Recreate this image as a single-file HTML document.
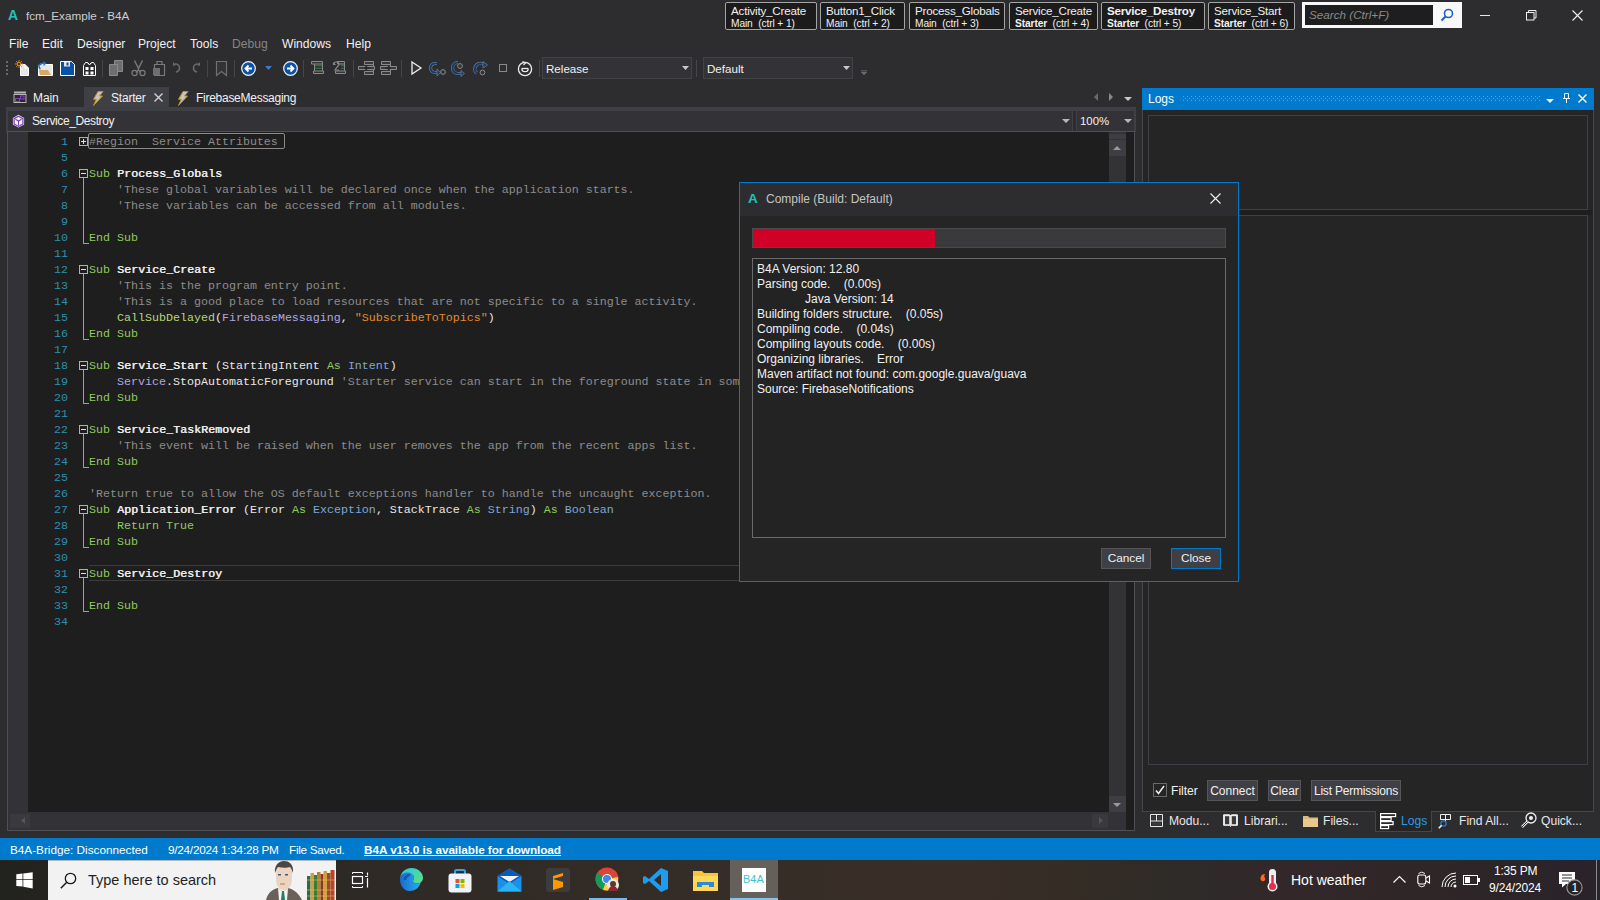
<!DOCTYPE html>
<html><head><meta charset="utf-8">
<style>
*{margin:0;padding:0;box-sizing:border-box}
html,body{width:1600px;height:900px;overflow:hidden;background:#2d2d30;font-family:"Liberation Sans",sans-serif;font-size:12px;color:#f1f1f1}
.a{position:absolute;white-space:nowrap}
svg{position:absolute;overflow:visible}
.mi{position:absolute;top:37px;font-size:12.1px;color:#f1f1f1;white-space:nowrap}
.qb{position:absolute;top:2px;height:28px;background:#1b1b1c;border:1px solid #a4a4a4;border-radius:2px}
.qb b{position:absolute;left:5px;top:1px;font-weight:normal;font-size:11.6px;letter-spacing:-0.2px;color:#f1f1f1}
.qb i{position:absolute;left:5px;top:15px;font-style:normal;font-size:10.2px;letter-spacing:-0.1px;color:#f1f1f1}
.qb i em{font-style:normal;font-weight:bold}
.tsep{position:absolute;top:60px;width:1px;height:17px;background:#46464a}
.ln{position:absolute;width:40px;left:28px;text-align:right;color:#2b91af;font-family:"Liberation Mono",monospace;font-size:11.67px;line-height:16px;height:16px}
.cl{position:absolute;left:89px;white-space:pre;font-family:"Liberation Mono",monospace;font-size:11.67px;line-height:16px;height:16px;color:#dcdcdc}
.kw{color:#8fcb5f}
.cm{color:#8c8c8c}
.ty{color:#7ea6d6}
.fn{color:#b5d77a}
.ob{color:#b0a6e0}
.st{color:#e68a2a}
.nm{color:#ececec;text-shadow:0.5px 0 0 #ececec}
.wh{color:#e8e8e8}
.rg{color:#8c8c8c}
.fold{position:absolute;left:79px;width:9px;height:9px;border:1px solid #b0b0b0;background:#1e1e1e}
.fold::after{content:"";position:absolute;left:1px;top:3px;width:5px;height:1px;background:#e0e0e0}
.vl{position:absolute;left:83px;width:1px;background:#a0a0a0}
.hl{position:absolute;left:83px;width:6px;height:1px;background:#a0a0a0}
.btn{position:absolute;height:21px;background:#3f3f46;border:1px solid #555558;color:#f1f1f1;font-size:12px;text-align:center;line-height:20px;white-space:nowrap}
.lt{position:absolute;left:757px;font-size:12px;color:#f1f1f1;white-space:nowrap;line-height:15px}

</style></head><body>
<!-- title bar -->
<div class="a" style="left:8px;top:7px;color:#1fc4bb;font-weight:bold;font-size:14px">A</div>
<div class="a" style="left:26px;top:9px;color:#cccccc;font-size:11.7px">fcm_Example - B4A</div>
<div class="qb" style="left:725px;width:92px"><b>Activity_Create</b><i>Main&nbsp; (ctrl + 1)</i></div>
<div class="qb" style="left:820px;width:85px"><b>Button1_Click</b><i>Main&nbsp; (ctrl + 2)</i></div>
<div class="qb" style="left:909px;width:96px"><b>Process_Globals</b><i>Main&nbsp; (ctrl + 3)</i></div>
<div class="qb" style="left:1009px;width:89px"><b>Service_Create</b><i><em>Starter</em>&nbsp; (ctrl + 4)</i></div>
<div class="qb" style="left:1101px;width:104px"><b style="font-weight:bold">Service_Destroy</b><i><em>Starter</em>&nbsp; (ctrl + 5)</i></div>
<div class="qb" style="left:1208px;width:87px"><b>Service_Start</b><i><em>Starter</em>&nbsp; (ctrl + 6)</i></div>
<div class="a" style="left:1302px;top:2px;width:160px;height:26px;background:#f8f8fa"></div>
<div class="a" style="left:1305px;top:5px;width:128px;height:20px;background:#1e1e1e"></div>
<div class="a" style="left:1309px;top:8px;color:#8a8a8a;font-style:italic;font-size:11.7px">Search (Ctrl+F)</div>
<svg style="left:1440px;top:8px" width="14" height="14"><circle cx="8.5" cy="5.5" r="4" fill="none" stroke="#2060c0" stroke-width="1.6"/><line x1="5.5" y1="8.5" x2="1.5" y2="12.5" stroke="#2060c0" stroke-width="2"/></svg>
<div class="a" style="left:1480px;top:15px;width:10px;height:1px;background:#e8e8e8"></div>
<svg style="left:1526px;top:10px" width="11" height="11"><rect x="0.5" y="2.5" width="7.5" height="7.5" fill="none" stroke="#f0f0f0"/><path d="M2.5 2.5V0.5H10V8H8" fill="none" stroke="#f0f0f0"/></svg>
<svg style="left:1572px;top:10px" width="11" height="11"><path d="M0.5 0.5l10 10M10.5 0.5l-10 10" stroke="#f0f0f0" stroke-width="1.1"/></svg>
<!-- menu -->
<div class="mi" style="left:9px">File</div>
<div class="mi" style="left:42px">Edit</div>
<div class="mi" style="left:77px">Designer</div>
<div class="mi" style="left:138px">Project</div>
<div class="mi" style="left:190px">Tools</div>
<div class="mi" style="left:232px;color:#858585">Debug</div>
<div class="mi" style="left:282px">Windows</div>
<div class="mi" style="left:346px">Help</div>
<!-- toolbar -->
<svg style="left:6px;top:60px" width="3" height="17"><g fill="#6a6a6a"><rect x="0" y="1" width="2" height="2"/><rect x="0" y="5" width="2" height="2"/><rect x="0" y="9" width="2" height="2"/><rect x="0" y="13" width="2" height="2"/></g></svg>
<!-- new -->
<svg style="left:15px;top:60px" width="16" height="16"><path d="M5.5 4.5h4.5l3.5 3.5v7.5h-8z" fill="#e6e6e6" stroke="#ffffff" stroke-width="1"/><path d="M10 4.5v3.5h3.5" fill="none" stroke="#ffffff"/><circle cx="4" cy="4" r="1.8" fill="none" stroke="#e8900a" stroke-width="1.1"/><path d="M4 0v1.6M4 6.4V8M0 4h1.6M6.4 4H8M1.2 1.2l1.1 1.1M5.7 5.7l1.1 1.1M6.8 1.2L5.7 2.3M2.3 5.7L1.2 6.8" stroke="#e8900a" stroke-width="1"/></svg>
<!-- open -->
<svg style="left:37px;top:60px" width="17" height="17"><path d="M1.5 5.5h2l1-1h11v11h-14z" fill="#e8e8e8" stroke="#ffffff" stroke-width="1"/><path d="M2 10h9l3 5H3z" fill="#d8a860"/><path d="M3.5 9c-2-1-2-4 0-5 1.5-1 3-1 4.5-0.5" fill="none" stroke="#1e72d0" stroke-width="1.6"/><path d="M6.5 1l3 2.5-3 2.5z" fill="#1e72d0"/></svg>
<!-- save -->
<svg style="left:60px;top:61px" width="15" height="15"><path d="M0.5 0.5h11l3 3v11h-14z" fill="#0a52a8" stroke="#ffffff" stroke-width="1"/><rect x="4" y="1" width="6" height="4.5" fill="#e8e8e8"/><rect x="6.5" y="1.5" width="2" height="3" fill="#0a52a8"/></svg>
<!-- save all -->
<svg style="left:83px;top:60px" width="13" height="16"><path d="M0.5 5.5l2-3h2l2 2 2-2h2l2 3v10h-12z" fill="#2a2a2a" stroke="#ffffff" stroke-width="1"/><path d="M4 2.5l2.5 2.5 2.5-2.5" fill="none" stroke="#ffffff" stroke-width="0.8"/><rect x="2.5" y="7" width="3" height="3" fill="#ffffff"/><rect x="7.5" y="7" width="3" height="3" fill="#ffffff"/><rect x="2.5" y="11.5" width="3" height="3" fill="#ffffff"/><rect x="7.5" y="11.5" width="3" height="3" fill="#ffffff"/></svg>
<div class="tsep" style="left:102px"></div>
<!-- copy -->
<svg style="left:108px;top:60px" width="16" height="17"><path d="M6.5 0.5h8v11h-8z" fill="#6e6e6e" stroke="#8a8a8a"/><path d="M1.5 4.5h8v11h-8z" fill="#6e6e6e" stroke="#8a8a8a"/></svg>
<!-- cut -->
<svg style="left:131px;top:60px" width="15" height="17"><path d="M3.5 0.5l4 8M11.5 0.5l-4 8M7.5 8.5v2" stroke="#7a7a7a" stroke-width="1.4" fill="none"/><path d="M7.5 10L5 12.5M7.5 10l2.5 2.5" stroke="#7a7a7a" stroke-width="1.2"/><circle cx="3.5" cy="13" r="2.6" fill="none" stroke="#7a7a7a" stroke-width="1.2"/><circle cx="11.5" cy="13" r="2.6" fill="none" stroke="#7a7a7a" stroke-width="1.2"/></svg>
<!-- paste -->
<svg style="left:152px;top:60px" width="15" height="16"><path d="M2.5 4.5h10v11h-10z" fill="none" stroke="#7a7a7a" stroke-width="1.2"/><path d="M5 4.5V1.5h5v3" fill="none" stroke="#7a7a7a" stroke-width="1.2"/><rect x="1" y="8" width="7" height="7" fill="#6e6e6e"/></svg>
<!-- undo/redo -->
<svg style="left:173px;top:62px" width="9" height="12"><path d="M2 2a4 4 0 1 1 1 8" fill="none" stroke="#6a6a6a" stroke-width="1.6"/><path d="M0 0l3 3-3 1z" fill="#6a6a6a"/></svg>
<svg style="left:191px;top:62px" width="9" height="12"><path d="M7 2a4 4 0 1 0-1 8" fill="none" stroke="#6a6a6a" stroke-width="1.6"/><path d="M9 0l-3 3 3 1z" fill="#6a6a6a"/></svg>
<div class="tsep" style="left:207px"></div>
<!-- bookmark -->
<svg style="left:216px;top:61px" width="12" height="15"><path d="M0.5 0.5h10v14l-5-4-5 4z" fill="#333336" stroke="#707070" stroke-width="1.2"/></svg>
<div class="tsep" style="left:234px"></div>
<!-- back / fwd -->
<svg style="left:241px;top:61px" width="15" height="15"><circle cx="7.5" cy="7.5" r="6.8" fill="#0a52a8" stroke="#f4f4f4" stroke-width="1.2"/><path d="M11 7.5H5M7.5 4.5l-3 3 3 3" stroke="#fff" stroke-width="1.8" fill="none"/></svg>
<svg style="left:265px;top:66px" width="7" height="4"><path d="M0 0h7l-3.5 4z" fill="#3a7ad8"/></svg>
<svg style="left:283px;top:61px" width="15" height="15"><circle cx="7.5" cy="7.5" r="6.8" fill="#0a52a8" stroke="#f4f4f4" stroke-width="1.2"/><path d="M4 7.5h6M7.5 4.5l3 3-3 3" stroke="#fff" stroke-width="1.8" fill="none"/></svg>
<div class="tsep" style="left:303px"></div>
<!-- comment/uncomment -->
<svg style="left:311px;top:61px" width="13" height="13"><path d="M0.5 0.5h11v2.5h-11zM2.5 10h10v2.5h-10zM3.5 3v7M11.5 3v7" fill="#333" stroke="#8a8a8a" stroke-width="1"/><path d="M4 4.8h7M4 7.2h7" stroke="#2a8a3a" stroke-width="1.1"/></svg>
<svg style="left:333px;top:61px" width="13" height="13"><path d="M4.5 0.5h7v2.5h-7zM2.5 10h10v2.5h-10zM11.5 3v7M3.5 3v0" fill="#333" stroke="#8a8a8a" stroke-width="1"/><path d="M8 4.8h3M8 7.2h3" stroke="#2a8a3a" stroke-width="1.1"/><path d="M0.5 1.5v2h2M1 3a2.5 2.5 0 1 1 3.5 2.5L2 9h4" fill="none" stroke="#8a8a8a" stroke-width="1.1"/></svg>
<div class="tsep" style="left:353px"></div>
<!-- indent -->
<svg style="left:358px;top:61px" width="17" height="14"><path d="M6.5 0.5h9v3h-9zM6.5 10.5h9v3h-9zM0.5 5.5h16v3h-16z M6.5 3.5h9v2M6.5 8.5h9v2" fill="#3a3a3a" stroke="#8a8a8a" stroke-width="1"/><path d="M12 7h-5M9 4.8L6.8 7 9 9.2" fill="none" stroke="#2a2a2a" stroke-width="1.4"/></svg>
<svg style="left:380px;top:61px" width="17" height="14"><path d="M1.5 0.5h9v3h-9zM1.5 10.5h9v3h-9zM0.5 5.5h16v3h-16z M1.5 3.5h9v2M1.5 8.5h9v2" fill="#3a3a3a" stroke="#8a8a8a" stroke-width="1"/><path d="M5 7h5M8 4.8L10.2 7 8 9.2" fill="none" stroke="#2a2a2a" stroke-width="1.4"/></svg>
<div class="tsep" style="left:401px"></div>
<!-- play -->
<svg style="left:411px;top:61px" width="11" height="14"><path d="M1 1L10 7 1 13z" fill="#333" stroke="#f0f0f0" stroke-width="1.3"/></svg>
<!-- step icons -->
<svg style="left:429px;top:60px" width="17" height="17"><path d="M8 3.5H6a4.5 4.5 0 0 0 0 9h2" fill="none" stroke="#7890a8" stroke-width="3.2"/><path d="M8 3.5H6a4.5 4.5 0 0 0 0 9h2" fill="none" stroke="#1a3a66" stroke-width="2.2"/><path d="M8 9l3.5 3.5L8 16z" fill="#1a3a66" stroke="#7890a8" stroke-width="0.6"/><circle cx="14" cy="12" r="2.4" fill="#333" stroke="#8a8a8a" stroke-width="1"/></svg>
<svg style="left:452px;top:60px" width="16" height="18"><path d="M6 2.5a5.5 5.5 0 0 0 0 11h3" fill="none" stroke="#7890a8" stroke-width="3.2"/><path d="M6 2.5a5.5 5.5 0 0 0 0 11h3" fill="none" stroke="#1a3a66" stroke-width="2.2"/><path d="M9 10.5l3.5 3-3.5 3z" fill="#1a3a66" stroke="#7890a8" stroke-width="0.6"/><circle cx="8" cy="6" r="2.4" fill="#333" stroke="#8a8a8a" stroke-width="1"/></svg>
<svg style="left:474px;top:60px" width="16" height="17"><path d="M2.5 13a5.5 5.5 0 0 1 8-8" fill="none" stroke="#7890a8" stroke-width="3.2"/><path d="M2.5 13a5.5 5.5 0 0 1 8-8" fill="none" stroke="#1a3a66" stroke-width="2.2"/><path d="M9 1.5l4.5 3.5-4.5 3z" fill="#1a3a66" stroke="#7890a8" stroke-width="0.6"/><circle cx="8.5" cy="12.5" r="2.4" fill="#333" stroke="#8a8a8a" stroke-width="1"/></svg>
<!-- stop -->
<svg style="left:499px;top:64px" width="9" height="9"><rect x="0.5" y="0.5" width="7" height="7" fill="none" stroke="#8a8a8a"/></svg>
<!-- restart -->
<svg style="left:517px;top:60px" width="16" height="17"><circle cx="8" cy="9" r="6.6" fill="none" stroke="#ececec" stroke-width="1.3"/><path d="M4.8 8.5a3.2 3.2 0 1 0 6.4 0" fill="none" stroke="#ececec" stroke-width="1.3"/><path d="M4.8 8.5h6.4" stroke="#ececec" stroke-width="1.3"/><path d="M5.5 1.5l3 1.5-2 2" fill="none" stroke="#ececec" stroke-width="1.2"/></svg>
<div class="tsep" style="left:539px"></div>
<!-- combos -->
<div class="a" style="left:542px;top:57px;width:150px;height:22px;background:#333337;border:1px solid #434346"></div>
<div class="a" style="left:546px;top:62px;font-size:11.6px;color:#f1f1f1">Release</div>
<svg style="left:682px;top:66px" width="7" height="4"><path d="M0 0h7l-3.5 4z" fill="#c8c8c8"/></svg>
<div class="tsep" style="left:696px"></div>
<div class="a" style="left:703px;top:57px;width:150px;height:22px;background:#333337;border:1px solid #434346"></div>
<div class="a" style="left:707px;top:62px;font-size:11.6px;color:#f1f1f1">Default</div>
<svg style="left:843px;top:66px" width="7" height="4"><path d="M0 0h7l-3.5 4z" fill="#c8c8c8"/></svg>
<svg style="left:861px;top:70px" width="6" height="6"><path d="M0 0.5h6M0 2h6l-3 3z" fill="#6a6a6a" stroke="#6a6a6a" stroke-width="0.6"/></svg>
<!-- tabs -->
<div class="a" style="left:84px;top:87px;width:85px;height:20px;background:#3f3f46"></div>
<div class="a" style="left:6px;top:107px;width:1130px;height:4px;background:#3f3f46"></div>
<svg style="left:13px;top:91px" width="14" height="13"><rect x="1" y="0.5" width="12" height="2" fill="#b4b4b4"/><rect x="1" y="3.5" width="12" height="8" fill="#2a2a2a" stroke="#b4b4b4" stroke-width="1"/><rect x="2.5" y="7.5" width="4" height="3" fill="none" stroke="#8a3ec8" stroke-width="1"/><rect x="7.5" y="5" width="3.5" height="3" fill="none" stroke="#8a3ec8" stroke-width="1"/></svg>
<div class="a" style="left:33px;top:91px;font-size:12px;letter-spacing:-0.1px;color:#f1f1f1">Main</div>
<svg style="left:91px;top:90.5px" width="14" height="15"><path d="M7 0.5h5l-3.5 4.5h3L2.5 14.5l2.8-6.2H2.5z" fill="#c4c4c4" stroke="#c09018" stroke-width="1" stroke-linejoin="round"/></svg>
<div class="a" style="left:111px;top:91px;font-size:12px;letter-spacing:-0.2px;color:#f1f1f1">Starter</div>
<svg style="left:154px;top:93px" width="9" height="9"><path d="M0.5 0.5l8 8M8.5 0.5l-8 8" stroke="#d4d4d4" stroke-width="1.3"/></svg>
<svg style="left:176px;top:90.5px" width="14" height="15"><path d="M7 0.5h5l-3.5 4.5h3L2.5 14.5l2.8-6.2H2.5z" fill="#c4c4c4" stroke="#c09018" stroke-width="1" stroke-linejoin="round"/></svg>
<div class="a" style="left:196px;top:91px;font-size:12px;letter-spacing:-0.27px;color:#f1f1f1">FirebaseMessaging</div>
<svg style="left:1094px;top:93px" width="5" height="8"><path d="M4 0v8L0 4z" fill="#6a6a6a"/></svg>
<svg style="left:1109px;top:93px" width="5" height="8"><path d="M0 0v8l4-4z" fill="#8a8a8a"/></svg>
<svg style="left:1124px;top:97px" width="8" height="4"><path d="M0 0h8L4 4z" fill="#c8c8c8"/></svg>
<div class="a" style="left:6px;top:111px;width:1130px;height:21px;background:#3f3f46"></div>
<div class="a" style="left:8px;top:111px;width:1065px;height:20px;background:#333337;border-right:1px solid #3f3f46"></div>
<div class="a" style="left:1073px;top:111px;width:3px;height:20px;background:#2d2d30"></div>
<div class="a" style="left:1076px;top:111px;width:58px;height:20px;background:#333337;border-left:1px solid #3f3f46"></div>
<svg style="left:12px;top:114px" width="13" height="14"><path d="M6.5 0.8l5.6 3.2v6.4l-5.6 3.2-5.6-3.2V4z" fill="#f4f4f4"/><path d="M6.5 2.2l4.4 2.5v5.2l-4.4 2.5-4.4-2.5V4.7z" fill="none" stroke="#7a3ac0" stroke-width="1.2"/><path d="M3.5 5.2l3 1.8 3-1.8M6.5 7v4.5" fill="none" stroke="#7a3ac0" stroke-width="1.1"/></svg>
<div class="a" style="left:32px;top:114px;font-size:12px;color:#f1f1f1;letter-spacing:-0.4px">Service_Destroy</div>
<svg style="left:1062px;top:119px" width="8" height="4"><path d="M0 0h8L4 4z" fill="#b8b8b8"/></svg>
<div class="a" style="left:1080px;top:115px;font-size:11.4px;color:#f1f1f1">100%</div>
<svg style="left:1124px;top:119px" width="8" height="4"><path d="M0 0h8L4 4z" fill="#b8b8b8"/></svg>
<div class="a" style="left:7px;top:131px;width:1128px;height:700px;border:1px solid #505054;background:#1e1e1e"></div>
<div class="a" style="left:8px;top:132px;width:20px;height:680px;background:#333337"></div>
<div class="a" style="left:1109px;top:132px;width:17px;height:680px;background:#333337"></div>
<div class="a" style="left:1109px;top:134px;width:17px;height:5px;background:#3e3e42"></div>
<div class="a" style="left:1109px;top:140px;width:17px;height:16px;background:#3e3e42"></div>
<svg style="left:1113px;top:146px" width="8" height="4"><path d="M0 4h8L4 0z" fill="#9a9a9a"/></svg>
<div class="a" style="left:1109px;top:157px;width:17px;height:640px;background:#333336"></div>
<div class="a" style="left:1109px;top:796px;width:17px;height:16px;background:#3e3e42"></div>
<svg style="left:1113px;top:803px" width="8" height="4"><path d="M0 0h8L4 4z" fill="#9a9a9a"/></svg>
<div class="a" style="left:8px;top:812px;width:1118px;height:18px;background:#333337"></div>
<div class="a" style="left:10px;top:814px;width:20px;height:14px;background:#3a3a3e"></div>
<svg style="left:21px;top:817px" width="4" height="7"><path d="M4 0v7L0 3.5z" fill="#555"/></svg>
<div class="a" style="left:1092px;top:814px;width:16px;height:14px;background:#3a3a3e"></div>
<svg style="left:1099px;top:817px" width="4" height="7"><path d="M0 0v7l4-3.5z" fill="#555"/></svg>
<div class="a" style="left:88px;top:133px;width:197px;height:16px;border:1px solid #8a8a8a;border-radius:2px"></div>
<div class="a" style="left:89px;top:565px;width:1020px;height:16px;border-top:1px solid #3c3c3c;border-bottom:1px solid #3c3c3c"></div>
<div class="ln" style="top:134px">1</div>
<div class="cl" style="top:134px"><span class="rg">#Region&nbsp; Service Attributes</span></div>
<div class="fold" style="top:137px"></div><div class="a" style="left:83px;top:139px;width:1px;height:5px;background:#e0e0e0"></div>
<div class="ln" style="top:150px">5</div>
<div class="ln" style="top:166px">6</div>
<div class="cl" style="top:166px"><span class="kw">Sub</span> <span class="nm">Process_Globals</span></div>
<div class="fold" style="top:169px"></div>
<div class="ln" style="top:182px">7</div>
<div class="cl" style="top:182px">    <span class="cm">'These global variables will be declared once when the application starts.</span></div>
<div class="ln" style="top:198px">8</div>
<div class="cl" style="top:198px">    <span class="cm">'These variables can be accessed from all modules.</span></div>
<div class="ln" style="top:214px">9</div>
<div class="ln" style="top:230px">10</div>
<div class="cl" style="top:230px"><span class="kw">End Sub</span></div>
<div class="vl" style="top:178px;height:65px"></div><div class="hl" style="top:243px"></div>
<div class="ln" style="top:246px">11</div>
<div class="ln" style="top:262px">12</div>
<div class="cl" style="top:262px"><span class="kw">Sub</span> <span class="nm">Service_Create</span></div>
<div class="fold" style="top:265px"></div>
<div class="ln" style="top:278px">13</div>
<div class="cl" style="top:278px">    <span class="cm">'This is the program entry point.</span></div>
<div class="ln" style="top:294px">14</div>
<div class="cl" style="top:294px">    <span class="cm">'This is a good place to load resources that are not specific to a single activity.</span></div>
<div class="ln" style="top:310px">15</div>
<div class="cl" style="top:310px">    <span class="fn">CallSubDelayed</span><span class="wh">(</span><span class="ob">FirebaseMessaging</span><span class="wh">, </span><span class="st">"SubscribeToTopics"</span><span class="wh">)</span></div>
<div class="ln" style="top:326px">16</div>
<div class="cl" style="top:326px"><span class="kw">End Sub</span></div>
<div class="vl" style="top:274px;height:65px"></div><div class="hl" style="top:339px"></div>
<div class="ln" style="top:342px">17</div>
<div class="ln" style="top:358px">18</div>
<div class="cl" style="top:358px"><span class="kw">Sub</span> <span class="nm">Service_Start</span> <span class="wh">(StartingIntent</span> <span class="kw">As</span> <span class="ty">Intent</span><span class="wh">)</span></div>
<div class="fold" style="top:361px"></div>
<div class="ln" style="top:374px">19</div>
<div class="cl" style="top:374px">    <span class="ob">Service</span><span class="wh">.StopAutomaticForeground</span> <span class="cm">'Starter service can start in the foreground state in some cases.</span></div>
<div class="ln" style="top:390px">20</div>
<div class="cl" style="top:390px"><span class="kw">End Sub</span></div>
<div class="vl" style="top:370px;height:33px"></div><div class="hl" style="top:403px"></div>
<div class="ln" style="top:406px">21</div>
<div class="ln" style="top:422px">22</div>
<div class="cl" style="top:422px"><span class="kw">Sub</span> <span class="nm">Service_TaskRemoved</span></div>
<div class="fold" style="top:425px"></div>
<div class="ln" style="top:438px">23</div>
<div class="cl" style="top:438px">    <span class="cm">'This event will be raised when the user removes the app from the recent apps list.</span></div>
<div class="ln" style="top:454px">24</div>
<div class="cl" style="top:454px"><span class="kw">End Sub</span></div>
<div class="vl" style="top:434px;height:33px"></div><div class="hl" style="top:467px"></div>
<div class="ln" style="top:470px">25</div>
<div class="ln" style="top:486px">26</div>
<div class="cl" style="top:486px"><span class="cm">'Return true to allow the OS default exceptions handler to handle the uncaught exception.</span></div>
<div class="ln" style="top:502px">27</div>
<div class="cl" style="top:502px"><span class="kw">Sub</span> <span class="nm">Application_Error</span> <span class="wh">(Error</span> <span class="kw">As</span> <span class="ty">Exception</span><span class="wh">, StackTrace</span> <span class="kw">As</span> <span class="ty">String</span><span class="wh">)</span> <span class="kw">As</span> <span class="ty">Boolean</span></div>
<div class="fold" style="top:505px"></div>
<div class="ln" style="top:518px">28</div>
<div class="cl" style="top:518px">    <span class="kw">Return True</span></div>
<div class="ln" style="top:534px">29</div>
<div class="cl" style="top:534px"><span class="kw">End Sub</span></div>
<div class="vl" style="top:514px;height:33px"></div><div class="hl" style="top:547px"></div>
<div class="ln" style="top:550px">30</div>
<div class="ln" style="top:566px">31</div>
<div class="cl" style="top:566px"><span class="kw">Sub</span> <span class="nm">Service_Destroy</span></div>
<div class="fold" style="top:569px"></div>
<div class="ln" style="top:582px">32</div>
<div class="ln" style="top:598px">33</div>
<div class="cl" style="top:598px"><span class="kw">End Sub</span></div>
<div class="vl" style="top:578px;height:33px"></div><div class="hl" style="top:611px"></div>
<div class="ln" style="top:614px">34</div><!-- logs panel -->
<div class="a" style="left:1142px;top:88px;width:452px;height:22px;background:#007acc"></div>
<div class="a" style="left:1148px;top:92px;font-size:12px;color:#ffffff">Logs</div>
<svg style="left:1183px;top:96px" width="358" height="6"><defs><pattern id="dp" width="4" height="4" patternUnits="userSpaceOnUse"><rect x="0" y="0" width="1" height="1" fill="#5fa6dc"/><rect x="2" y="2" width="1" height="1" fill="#5fa6dc"/></pattern></defs><rect width="358" height="6" fill="url(#dp)"/></svg>
<svg style="left:1546px;top:99px" width="8" height="4"><path d="M0 0h8L4 4z" fill="#e8f0f8"/></svg>
<svg style="left:1563px;top:93px" width="7" height="10"><path d="M1.5 0.5h4v5h-4zM0 5.5h7M3.5 6v4" fill="none" stroke="#f0f0f0" stroke-width="1"/></svg>
<svg style="left:1578px;top:94px" width="9" height="9"><path d="M0.5 0.5l8 8M8.5 0.5l-8 8" stroke="#ffffff" stroke-width="1.4"/></svg>
<div class="a" style="left:1142px;top:110px;width:452px;height:702px;background:#252526;border-left:1px solid #46464a;border-right:1px solid #46464a;border-bottom:1px solid #46464a"></div>
<div class="a" style="left:1148px;top:115px;width:440px;height:95px;border:1px solid #3f3f46;background:#252526"></div>
<div class="a" style="left:1144px;top:210px;width:448px;height:5px;background:#1e1e1e"></div>
<div class="a" style="left:1148px;top:215px;width:440px;height:550px;border:1px solid #3f3f46;background:#252526"></div>
<div class="a" style="left:1153px;top:783px;width:14px;height:14px;border:1px solid #6a6a6a;background:#252526"></div>
<svg style="left:1155px;top:785px" width="10" height="10"><path d="M1 5.5l2.5 3L9 1" fill="none" stroke="#f0f0f0" stroke-width="1.5"/></svg>
<div class="a" style="left:1171px;top:784px;font-size:12.1px;color:#f1f1f1">Filter</div>
<div class="btn" style="left:1207px;top:780px;width:51px">Connect</div>
<div class="btn" style="left:1268px;top:780px;width:33px">Clear</div>
<div class="btn" style="left:1311px;top:780px;width:90px;letter-spacing:-0.2px">List Permissions</div>
<!-- bottom tabs -->
<div class="a" style="left:1375px;top:811px;width:57px;height:21px;background:#252526;border:1px solid #46464a;border-top:none"></div>
<svg style="left:1150px;top:814px" width="13" height="13"><path d="M0.5 0.5h12v12h-12zM0.5 7h12M6.5 0.5V7" fill="none" stroke="#e8e8e8" stroke-width="1"/><rect x="2" y="2" width="3" height="3.5" fill="#3a3a3a"/><rect x="8" y="2" width="3" height="3.5" fill="#3a3a3a"/><rect x="2" y="8.5" width="9" height="2.5" fill="#3a3a3a"/></svg>
<div class="a" style="left:1169px;top:814px;font-size:12.1px;color:#e8e8e8">Modu...</div>
<svg style="left:1223px;top:814px" width="15" height="13"><path d="M0.6 0.8h5.5c0.8 0 1.4 0.6 1.4 1.2 0-0.6 0.6-1.2 1.4-1.2h5.5v10.5H9c-0.8 0-1.5 0.5-1.5 1.2 0-0.7-0.7-1.2-1.5-1.2H0.6z" fill="#e8e8e8" stroke="#f0f0f0" stroke-width="1"/><rect x="2" y="2.2" width="4.2" height="8" fill="#3a3a3a"/><rect x="8.8" y="2.2" width="4.2" height="8" fill="#3a3a3a"/></svg>
<div class="a" style="left:1244px;top:814px;font-size:12.1px;color:#e8e8e8">Librari...</div>
<svg style="left:1303px;top:814px" width="15" height="13"><path d="M0 2h5l1.5 1.5H15V13H0z" fill="#dcb97a"/><path d="M0 5h15v8H0z" fill="#e8c88e"/></svg>
<div class="a" style="left:1323px;top:814px;font-size:12.1px;color:#e8e8e8">Files...</div>
<svg style="left:1380px;top:813px" width="17" height="17"><g fill="#2a2a2a" stroke="#ffffff" stroke-width="1.2"><rect x="0.6" y="0.6" width="15" height="3"/><rect x="0.6" y="4.6" width="10.5" height="3"/><rect x="0.6" y="8.6" width="12.5" height="3"/><rect x="0.6" y="12.6" width="8" height="3"/></g></svg>
<div class="a" style="left:1401px;top:814px;font-size:12.1px;color:#2d9ae8">Logs</div>
<svg style="left:1438px;top:814px" width="15" height="15"><path d="M2.5 0.5h5v5h-5zM7.5 0.5h5v5h-5zM2.5 5.5h5v3" fill="#2a2a2a" stroke="#f0f0f0" stroke-width="1"/><circle cx="5.5" cy="9.5" r="2.6" fill="#2a2a2a" stroke="#2a7ad8" stroke-width="1.3"/><path d="M3.6 11.4L0.8 14.2" stroke="#f0f0f0" stroke-width="1.6"/></svg>
<div class="a" style="left:1459px;top:814px;font-size:12.1px;color:#e8e8e8">Find All...</div>
<svg style="left:1521px;top:812px" width="16" height="16"><circle cx="10" cy="6" r="5" fill="#2a2a2a" stroke="#f0f0f0" stroke-width="1.3"/><circle cx="10" cy="6" r="2" fill="#f0f0f0"/><path d="M6.5 9.5L1 15" stroke="#f0f0f0" stroke-width="2.6"/><path d="M6.5 9.5L1 15" stroke="#2a2a2a" stroke-width="1"/></svg>
<div class="a" style="left:1541px;top:814px;font-size:12.1px;color:#e8e8e8">Quick...</div>
<!-- status bar -->
<div class="a" style="left:0;top:838px;width:1600px;height:22px;background:#007acc"></div>
<div class="a" style="left:10px;top:843px;font-size:11.75px;color:#ffffff">B4A-Bridge: Disconnected</div>
<div class="a" style="left:168px;top:843px;font-size:11.75px;letter-spacing:-0.25px;color:#ffffff">9/24/2024 1:34:28 PM</div>
<div class="a" style="left:289px;top:843px;font-size:11.75px;letter-spacing:-0.3px;color:#ffffff">File Saved.</div>
<div class="a" style="left:364px;top:843px;font-size:11.75px;letter-spacing:-0.05px;color:#ffffff;font-weight:bold;text-decoration:underline">B4A v13.0 is available for download</div>
<!-- taskbar -->
<div class="a" style="left:0;top:860px;width:1600px;height:40px;background:linear-gradient(90deg,#22221e 0%,#24231f 3%,#2f2a26 25%,#352d26 45%,#392e27 60%,#332c25 68%,#2e2b29 75%,#33272a 80%,#2e2627 90%,#29232a 100%)"></div>
<svg style="left:15.5px;top:871.5px" width="17" height="17"><g fill="#ffffff"><path d="M0.3 2.3L6.5 1.6V7.2H0.3z"/><path d="M7.3 1.5L16.7 0.3V7.2H7.3z"/><path d="M0.3 8.1H6.5V14.6L0.3 13.9z"/><path d="M7.3 8.1H16.7V16.5L7.3 14.8z"/></g></svg>
<div class="a" style="left:48px;top:860px;width:288px;height:40px;background:#f2f2f2;border-top:1px solid #b8b8b8"></div>
<svg style="left:60px;top:872px" width="17" height="17"><circle cx="10.5" cy="6.5" r="5.2" fill="none" stroke="#1a1a1a" stroke-width="1.3"/><path d="M6.8 10.2L0.8 16.2" stroke="#1a1a1a" stroke-width="1.5"/></svg>
<div class="a" style="left:88px;top:872px;font-size:14.5px;color:#1f1f1f">Type here to search</div>
<!-- picture: man with books -->
<svg style="left:262px;top:860px" width="74" height="40">
 <g>
 <rect x="45" y="16" width="3.5" height="24" fill="#2e6a4a"/><rect x="48.5" y="13" width="3.5" height="27" fill="#c8a040"/><rect x="52" y="15" width="3" height="25" fill="#3a7a3a"/><rect x="55" y="12" width="3.5" height="28" fill="#b8802a"/><rect x="58.5" y="14" width="3" height="26" fill="#8a3a1a"/><rect x="61.5" y="11" width="3.5" height="29" fill="#d0a040"/><rect x="65" y="13" width="3.5" height="27" fill="#a04a20"/><rect x="68.5" y="10" width="4" height="30" fill="#b8442a"/>
 <path d="M45 20h28M45 30h28M45 36h28" stroke="#e8c060" stroke-width="0.8" opacity="0.7"/>
 </g>
 <path d="M4 40c2-8 7-11 12-12l5 4 5-4c5 1 10 4 14 12z" fill="#6a625a"/>
 <path d="M16 28l5 4 5-4 -1 12h-8z" fill="#f4f4f0"/>
 <path d="M20 31h2l1 9h-4z" fill="#2a7a6a"/>
 <path d="M14 10c0-6 4-9 8-9s8 3 8 9v10c0 6-4 10-8 10s-8-4-8-10z" fill="#ecd4c0"/>
 <path d="M13 13c-1-8 4-12 9-12s10 3 9 12c-1-3-2-5-3-6-3 1-8 1-12 0-1 1-2 3-3 6z" fill="#4a4846"/>
 <rect x="16" y="14" width="3" height="1.5" fill="#3a5a8a"/><rect x="23" y="14" width="3" height="1.5" fill="#3a5a8a"/>
 <path d="M18 24h5" stroke="#b07a6a" stroke-width="1"/>
</svg>
<!-- task view -->
<svg style="left:352px;top:872px" width="17" height="16"><path d="M0.5 0.5h10M0.5 15.5h10" stroke="#ffffff" stroke-width="1"/><path d="M0.5 0.5v1.5M10.5 0.5v1.5M0.5 15.5V14M10.5 15.5V14" stroke="#ffffff" stroke-width="1"/><rect x="0.5" y="4.5" width="10" height="7" fill="none" stroke="#ffffff" stroke-width="1.2"/><path d="M15.5 0.5v3M15.5 6v9.5" stroke="#ffffff" stroke-width="1.2"/><path d="M13 4.5h3" stroke="#ffffff"/></svg>
<!-- edge -->
<svg style="left:399px;top:867px" width="25" height="26"><defs><linearGradient id="eg1" x1="0" y1="0" x2="1" y2="0"><stop offset="0" stop-color="#1a6ad0"/><stop offset="1" stop-color="#2ab0f0"/></linearGradient><linearGradient id="eg2" x1="0" y1="0" x2="1" y2="1"><stop offset="0" stop-color="#2ec8e8"/><stop offset="1" stop-color="#5ce07a"/></linearGradient></defs>
<path d="M12.5 1C19 1 24 5.5 24 11c0 3.5-3 5.5-6 5.5-2.5 0-4-1-4-2.5 0-1 1-1.5 1-3 0-3-3-5-6.5-5S1 8 1 12.5C1 6 6 1 12.5 1z" fill="url(#eg2)"/>
<path d="M1 12.5C1 7.5 5 5.5 8.5 5.5 12 5.5 15 7.5 15 11c0 1.5-1 2-1 3 0 1.5 1.5 2.5 4 2.5 1.5 0 3-0.5 4-1.5-1.5 5-5.5 9-11 9C5.5 24.5 1 19 1 12.5z" fill="url(#eg1)"/>
<path d="M6 13c0-3 2-5 5-5" fill="none" stroke="#0a3a8a" stroke-width="2.5" opacity="0.6"/>
</svg>
<!-- store -->
<svg style="left:448px;top:868px" width="24" height="25"><path d="M7 6V3.5a1.5 1.5 0 0 1 1.5-1.5h7A1.5 1.5 0 0 1 17 3.5V6" fill="none" stroke="#2aa8e8" stroke-width="2"/><rect x="0.5" y="5.5" width="23" height="19" rx="3" fill="#f0f4f8"/><rect x="7.5" y="11" width="4" height="4" fill="#f25022"/><rect x="12.5" y="11" width="4" height="4" fill="#7fba00"/><rect x="7.5" y="16" width="4" height="4" fill="#00a4ef"/><rect x="12.5" y="16" width="4" height="4" fill="#ffb900"/></svg>
<!-- mail -->
<svg style="left:497px;top:868px" width="25" height="24"><path d="M0.5 8L12.5 0.5 24.5 8v15.5h-24z" fill="#1a90e8"/><path d="M0.5 8L12.5 0.5 24.5 8 12.5 16z" fill="#0a5ab8"/><path d="M3 8h19l-9.5 6z" fill="#f0f4fa"/><path d="M0.5 23.5L12.5 13l12 10.5z" fill="#2ab4f4"/></svg>
<!-- sublime -->
<svg style="left:546px;top:868px" width="24" height="24"><rect x="0" y="0" width="24" height="24" rx="3" fill="#3c3c3c"/><path d="M7 8l10-3v3L7 11zM7 11l10 3v3L7 14zM7 14l10 3v2L7 22z" fill="#ff9800"/></svg>
<!-- chrome -->
<svg style="left:595px;top:867px" width="26" height="26"><circle cx="12" cy="12" r="11.5" fill="#db4437"/><path d="M12 12L2.2 6A11.5 11.5 0 0 0 8 22.8z" fill="#0f9d58"/><path d="M12 12l-4 10.8A11.5 11.5 0 0 0 23 10z" fill="#ffcd40"/><circle cx="12" cy="12" r="5" fill="#ffffff"/><circle cx="12" cy="12" r="4" fill="#4285f4"/><circle cx="18" cy="18" r="6" fill="#e8e8e8"/><circle cx="18" cy="17" r="3" fill="#5a3a2a"/><path d="M13 24c1-4 3-5 5-5s4 1 5 5z" fill="#8a2a2a"/></svg>
<div class="a" style="left:589px;top:898px;width:38px;height:2px;background:#76b9ed"></div>
<!-- vscode -->
<svg style="left:643px;top:868px" width="25" height="24"><path d="M18 0l7 3v18l-7 3L6 13l-4 3-2-1V9l2-1 4 3zM18 6l-7 6 7 6z" fill="#1f9cf0"/></svg>
<!-- explorer -->
<svg style="left:693px;top:869px" width="25" height="22"><path d="M0 2h9l2 2h14v18H0z" fill="#f8c43a"/><path d="M0 7h25v15H0z" fill="#ffd75a"/><rect x="4" y="13" width="17" height="5" fill="#2a8ad8"/><rect x="9" y="16" width="7" height="6" fill="#ffd75a"/></svg>
<!-- b4a active -->
<div class="a" style="left:730px;top:860px;width:48px;height:40px;background:#65605a"></div>
<div class="a" style="left:730px;top:898px;width:48px;height:2px;background:#86c2f0"></div>
<div class="a" style="left:742px;top:868px;width:24px;height:24px;background:#ffffff"></div>
<div class="a" style="left:743px;top:873px;font-size:11px;color:#3cc4cc">B4A</div>
<!-- tray -->
<svg style="left:1259px;top:867px" width="22" height="26"><path d="M3 8c-2 2-2 5 0 6 2 1 4-1 3-3-1-1-1-2 0-4-2 0-3 1-3 1z" fill="#ff6a20"/><rect x="10" y="2" width="7" height="18" rx="3.5" fill="#f0f0f0"/><circle cx="13.5" cy="19.5" r="5" fill="#f0f0f0"/><circle cx="13.5" cy="19.5" r="3.5" fill="#e0304a"/><rect x="12.3" y="8" width="2.4" height="10" fill="#e0304a"/></svg>
<div class="a" style="left:1291px;top:872px;font-size:14px;color:#ffffff">Hot weather</div>
<svg style="left:1393px;top:875px" width="13" height="8"><path d="M0.5 7.5l6-6 6 6" fill="none" stroke="#ffffff" stroke-width="1.2"/></svg>
<svg style="left:1417px;top:871px" width="14" height="18"><rect x="0.8" y="4" width="8" height="9" rx="2" fill="none" stroke="#ffffff" stroke-width="1.1"/><path d="M9 7l3.5-2v7L9 10" fill="none" stroke="#ffffff" stroke-width="1.1"/><path d="M1.5 2.5a5 5 0 0 1 6.5 0M1.5 14.5a5 5 0 0 0 6.5 0" fill="none" stroke="#ffffff" stroke-width="0.9"/></svg>
<svg style="left:1441px;top:872px" width="16" height="16"><path d="M1 15A14 14 0 0 1 15 1M4 15A11 11 0 0 1 15 4M7 15A8 8 0 0 1 15 7M10 15a5 5 0 0 1 5-5" fill="none" stroke="#ffffff" stroke-width="1"/><circle cx="14" cy="14" r="1.5" fill="#ffffff"/></svg>
<svg style="left:1463px;top:875px" width="17" height="10"><rect x="0.5" y="0.5" width="14" height="9" fill="none" stroke="#ffffff" stroke-width="1"/><rect x="2" y="2" width="5" height="6" fill="#ffffff"/><rect x="15" y="3" width="2" height="4" fill="#ffffff"/></svg>
<div class="a" style="left:1494px;top:864px;font-size:12px;letter-spacing:-0.2px;color:#ffffff">1:35 PM</div>
<div class="a" style="left:1489px;top:881px;font-size:12px;letter-spacing:-0.15px;color:#ffffff">9/24/2024</div>
<svg style="left:1558px;top:870px" width="28" height="30"><path d="M1 2h16v12H8l-4 3.5V14H1z" fill="#ffffff"/><path d="M4 5h10M4 8h10M4 11h7" stroke="#2a2a2a" stroke-width="1"/><circle cx="16.5" cy="17.5" r="7.6" fill="#262322" stroke="#9a9a9a" stroke-width="1.1"/><text x="13.6" y="22" font-size="12" fill="#ffffff" font-family="Liberation Sans">1</text></svg>
<div class="a" style="left:1596px;top:860px;width:1px;height:40px;background:#8a8a8a"></div>
<!-- dialog -->
<div class="a" style="left:739px;top:182px;width:500px;height:400px;background:#252526;border:1px solid #007acc"></div>
<div class="a" style="left:740px;top:183px;width:498px;height:33px;background:#2d2d30"></div>
<div class="a" style="left:748px;top:191px;color:#1fc4bb;font-weight:bold;font-size:13.5px">A</div>
<div class="a" style="left:766px;top:192px;font-size:12px;color:#c4c4c4">Compile (Build: Default)</div>
<svg style="left:1209.5px;top:192.5px" width="11" height="11"><path d="M0.5 0.5l10 10M10.5 0.5l-10 10" stroke="#f0f0f0" stroke-width="1.1"/></svg>
<div class="a" style="left:752px;top:228px;width:474px;height:20px;background:#3a3a3d;border:1px solid #4a4a4e"></div>
<div class="a" style="left:753px;top:229px;width:182px;height:18px;background:#d00026"></div>
<div class="a" style="left:752px;top:258px;width:474px;height:280px;background:#232324;border:1px solid #6a6a6a"></div>
<div class="lt" style="top:262px">B4A Version: 12.80</div>
<div class="lt" style="top:277px">Parsing code.&nbsp;&nbsp;&nbsp; (0.00s)</div>
<div class="lt" style="top:292px;left:805px">Java Version: 14</div>
<div class="lt" style="top:307px">Building folders structure.&nbsp;&nbsp;&nbsp; (0.05s)</div>
<div class="lt" style="top:322px">Compiling code.&nbsp;&nbsp;&nbsp; (0.04s)</div>
<div class="lt" style="top:337px">Compiling layouts code.&nbsp;&nbsp;&nbsp; (0.00s)</div>
<div class="lt" style="top:352px">Organizing libraries.&nbsp;&nbsp;&nbsp; Error</div>
<div class="lt" style="top:367px">Maven artifact not found: com.google.guava/guava</div>
<div class="lt" style="top:382px">Source: FirebaseNotifications</div>
<div class="btn" style="left:1101px;top:548px;width:50px;height:21px;line-height:19px;font-size:11.8px">Cancel</div>
<div class="btn" style="left:1171px;top:548px;width:50px;height:21px;line-height:19px;font-size:11.8px;border-color:#007acc">Close</div>

</body></html>
